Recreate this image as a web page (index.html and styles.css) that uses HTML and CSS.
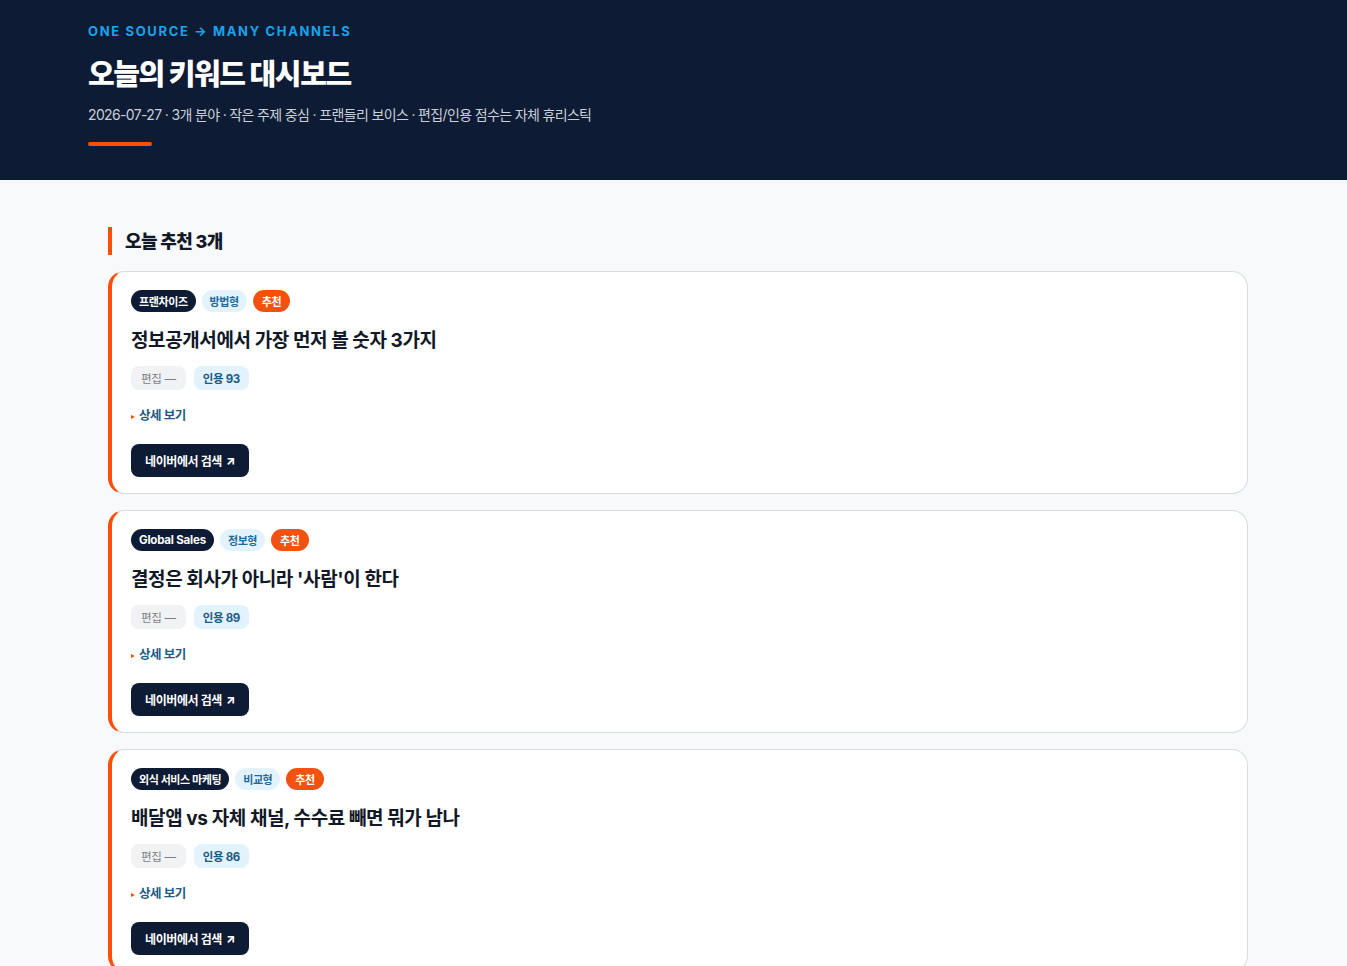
FILE: index.html
```html
<!DOCTYPE html>
<html lang="ko">
<head>
<meta charset="utf-8">
<title>오늘의 키워드 대시보드</title>
<link rel="stylesheet" href="styles.css">
</head>
<body>
<header class="hero">
  <div class="hero-inner">
    <div class="eyebrow">ONE SOURCE → MANY CHANNELS</div>
    <h1 class="hero-title">오늘의 키워드 대시보드</h1>
    <p class="hero-sub">2026-07-27 · 3개 분야 · 작은 주제 중심 · 프랜들리 보이스 · 편집/인용 점수는 자체 휴리스틱</p>
    <div class="hero-bar"></div>
  </div>
</header>
<main class="main">
  <h2 class="section-title">오늘 추천 3개</h2>
  <div class="cards">
    <article class="card">
      <div class="badges">
        <span class="badge badge-dark">프랜차이즈</span>
        <span class="badge badge-light">방법형</span>
        <span class="badge badge-orange">추천</span>
      </div>
      <h3 class="card-title">정보공개서에서 가장 먼저 볼 숫자 3가지</h3>
      <div class="chips">
        <span class="chip chip-gray">편집 —</span>
        <span class="chip chip-blue">인용 93</span>
      </div>
      <details class="detail"><summary>상세 보기</summary></details>
      <a class="search-btn" href="#">네이버에서 검색 <span class="arrow">↗</span></a>
    </article>
    <article class="card">
      <div class="badges">
        <span class="badge badge-dark badge-latin">Global Sales</span>
        <span class="badge badge-light">정보형</span>
        <span class="badge badge-orange">추천</span>
      </div>
      <h3 class="card-title">결정은 회사가 아니라 '사람'이 한다</h3>
      <div class="chips">
        <span class="chip chip-gray">편집 —</span>
        <span class="chip chip-blue">인용 89</span>
      </div>
      <details class="detail"><summary>상세 보기</summary></details>
      <a class="search-btn" href="#">네이버에서 검색 <span class="arrow">↗</span></a>
    </article>
    <article class="card">
      <div class="badges">
        <span class="badge badge-dark">외식 서비스 마케팅</span>
        <span class="badge badge-light">비교형</span>
        <span class="badge badge-orange">추천</span>
      </div>
      <h3 class="card-title">배달앱 vs 자체 채널, 수수료 빼면 뭐가 남나</h3>
      <div class="chips">
        <span class="chip chip-gray">편집 —</span>
        <span class="chip chip-blue">인용 86</span>
      </div>
      <details class="detail"><summary>상세 보기</summary></details>
      <a class="search-btn" href="#">네이버에서 검색 <span class="arrow">↗</span></a>
    </article>
  </div>
</main>
</body>
</html>
```

FILE: styles.css
```css
* { box-sizing: border-box; }
html, body { margin: 0; padding: 0; }
body {
  font-family: Inter, "Noto Sans CJK KR", "Noto Sans", sans-serif;
  background: #f7f9fb;
  color: #111827;
}
.hero {
  background: #0e1b34;
  height: 180px;
}
.hero-inner {
  padding: 22px 88px 0;
}
.eyebrow {
  color: #1aa3ec;
  font-size: 13px;
  font-weight: 700;
  letter-spacing: 1.65px;
  line-height: 18px;
}
.hero-title {
  margin: 17px 0 0;
  color: #ffffff;
  font-size: 29px;
  font-weight: 800;
  letter-spacing: -1.4px;
  line-height: 36px;
}
.hero-sub {
  margin: 12px 0 0;
  color: #c9cfd9;
  font-size: 14px;
  letter-spacing: -0.65px;
  line-height: 20px;
}
.hero-bar {
  margin-top: 17px;
  width: 64px;
  height: 4px;
  border-radius: 2px;
  background: #ff4d0a;
}
.main {
  padding: 47px 99px 40px 108px;
}
.section-title {
  margin: 0 0 16px;
  border-left: 4px solid #ff4d0a;
  padding-left: 13px;
  height: 28px;
  display: flex;
  align-items: center;
  padding-bottom: 2px;
  font-size: 18px;
  font-weight: 800;
  letter-spacing: -0.6px;
  color: #111827;
}
.cards {
  display: flex;
  flex-direction: column;
  gap: 16px;
}
.card {
  background: #ffffff;
  border: 1px solid #d8dbe0;
  border-left: 4px solid #ff4d0a;
  border-radius: 16px;
  padding: 18px 20px 16px 19px;
  display: flex;
  flex-direction: column;
  align-items: flex-start;
}
.badges {
  display: flex;
  gap: 6px;
}
.badge {
  height: 22px;
  display: inline-flex;
  align-items: center;
  padding: 0 8px;
  border-radius: 11px;
  font-size: 11px;
  font-weight: 700;
  letter-spacing: -0.4px;
}
.badge-latin {
  font-size: 11.5px;
  letter-spacing: -0.2px;
  padding: 0 8px;
}
.badge-dark { background: #0e1b34; color: #ffffff; }
.badge-light { background: #e2f3fd; color: #1f6a98; font-weight: 600; padding: 0 8px; }
.badge-orange { background: #f2520e; color: #ffffff; padding: 0 9px; }
.card-title {
  margin: 15px 0 0;
  font-size: 19px;
  font-weight: 700;
  letter-spacing: -0.4px;
  line-height: 27px;
  color: #111827;
}
.chips {
  margin-top: 12px;
  display: flex;
  gap: 8px;
}
.chip {
  height: 24px;
  display: inline-flex;
  align-items: center;
  padding: 0 10px;
  border-radius: 8px;
  font-size: 11.5px;
  letter-spacing: -0.3px;
}
.chip-gray { background: #f1f2f4; color: #7b7f87; }
.chip-blue { background: #e2f3fd; color: #1d5a84; font-weight: 700; padding: 0 9px; }
.detail {
  margin-top: 17px;
}
.detail summary {
  font-size: 12.5px;
  font-weight: 700;
  color: #1d5a84;
  line-height: 18px;
  letter-spacing: -0.4px;
  cursor: pointer;
  list-style: none;
  display: flex;
  align-items: center;
}
.detail summary::-webkit-details-marker { display: none; }
.detail summary::before {
  content: "";
  width: 0;
  height: 0;
  border-top: 2.5px solid transparent;
  border-bottom: 2.5px solid transparent;
  border-left: 4px solid #ff4d0a;
  margin-right: 4px;
  margin-top: 2px;
}
.search-btn {
  margin-top: 19px;
  height: 33px;
  display: inline-flex;
  align-items: center;
  padding: 0 14px;
  border-radius: 8px;
  background: #0e1b34;
  color: #ffffff;
  text-decoration: none;
  font-size: 12px;
  font-weight: 700;
  letter-spacing: -0.4px;
}
.search-btn .arrow {
  margin-left: 4px;
  font-weight: 800;
}
```
